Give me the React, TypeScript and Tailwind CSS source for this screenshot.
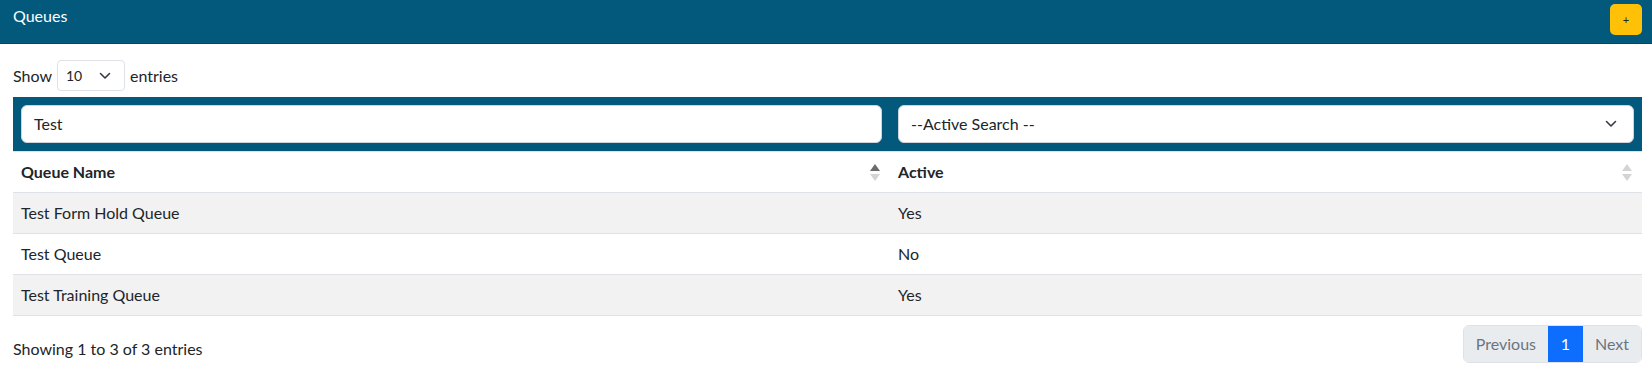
import React from 'react';

const rows = [
  { name: 'Test Form Hold Queue', active: 'Yes' },
  { name: 'Test Queue', active: 'No' },
  { name: 'Test Training Queue', active: 'Yes' },
];

const SortIcon: React.FC<{ dir?: 'asc' | 'none' }> = ({ dir = 'none' }) => (
  <svg width="10" height="17" viewBox="0 0 10 17" className="shrink-0">
    <polygon points="5,0 10,7 0,7" fill={dir === 'asc' ? '#6b6b6b' : '#d4d4d4'} />
    <polygon points="5,17 10,10 0,10" fill="#d4d4d4" />
  </svg>
);

const Chevron: React.FC = () => (
  <svg width="12" height="8" viewBox="0 0 12 8" className="shrink-0">
    <polyline points="1.5,1.5 6,6 10.5,1.5" fill="none" stroke="#343a40" strokeWidth="1.6" strokeLinecap="round" strokeLinejoin="round" />
  </svg>
);

export default function App() {
  return (
    <div className="w-[1652px] h-[373px] bg-white text-[#212529] text-[16px] overflow-hidden" style={{ fontFamily: 'Lato, "Open Sans", sans-serif' }}>
      {/* Header */}
      <div className="h-[44px] bg-[#02597c] border-b border-[#0a4560] flex items-start justify-between pl-[13px] pr-[10px]">
        <span className="text-white leading-6 pt-[4px]">Queues</span>
        <button className="mt-[4px] w-[32px] h-[31px] rounded-[5px] bg-[#ffc107] text-[#212529] text-[11px] leading-none flex items-center justify-center">+</button>
      </div>

      <div className="pl-[13px] pr-[10px]">
        {/* Show entries */}
        <div className="flex items-center h-[31px] mt-[16px] gap-[5px]">
          <span>Show</span>
          <div className="w-[68px] h-[31px] border border-[#dee2e6] rounded-[4px] flex items-center justify-between pl-[8px] pr-[13px] text-[14px]">
            <span>10</span>
            <Chevron />
          </div>
          <span>entries</span>
        </div>

        {/* Table */}
        <table className="w-full mt-[6px] border-collapse">
          <thead>
            <tr className="bg-[#02597c]">
              <th className="w-[877px] p-[8px] font-normal">
                <div className="h-[38px] bg-white rounded-[6px] border border-[#ced4da] flex items-center px-[12px] text-left">Test</div>
              </th>
              <th className="p-[8px] font-normal">
                <div className="h-[38px] bg-white rounded-[6px] border border-[#ced4da] flex items-center justify-between pl-[12px] pr-[16px] text-left">
                  <span>--Active Search --</span>
                  <Chevron />
                </div>
              </th>
            </tr>
            <tr className="border-t border-[#dee2e6] border-b border-[#dee2e6]">
              <th className="p-[8px] text-left font-bold">
                <div className="flex items-center justify-between pr-[2px]">
                  <span>Queue Name</span>
                  <SortIcon dir="asc" />
                </div>
              </th>
              <th className="p-[8px] text-left font-bold">
                <div className="flex items-center justify-between pr-[2px]">
                  <span>Active</span>
                  <SortIcon />
                </div>
              </th>
            </tr>
          </thead>
          <tbody>
            {rows.map((r, i) => (
              <tr key={r.name} className={`border-b border-[#dee2e6] ${i % 2 === 0 ? 'bg-[#f2f2f2]' : 'bg-white'}`}>
                <td className="p-[8px] leading-6">{r.name}</td>
                <td className="p-[8px] leading-6">{r.active}</td>
              </tr>
            ))}
          </tbody>
        </table>

        {/* Footer */}
        <div className="flex items-start justify-between mt-[9px]">
          <span className="pt-[12px] leading-6">Showing 1 to 3 of 3 entries</span>
          <div className="flex h-[38px] rounded-[6px] overflow-hidden border border-[#dee2e6]">
            <span className="bg-[#e9ecef] text-[#6c757d] px-[12px] flex items-center">Previous</span>
            <span className="bg-[#0d6efd] text-white w-[35px] flex items-center justify-center">1</span>
            <span className="bg-[#e9ecef] text-[#6c757d] px-[12px] flex items-center">Next</span>
          </div>
        </div>
      </div>
    </div>
  );
}
